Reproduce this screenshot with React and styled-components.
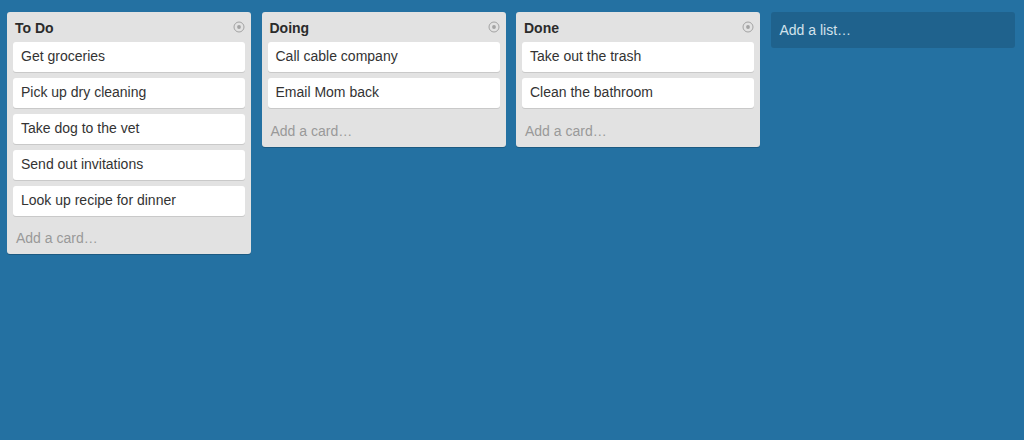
import React from 'react';
import styled, { createGlobalStyle } from 'styled-components';

const GlobalStyle = createGlobalStyle`
  html, body {
    margin: 0;
    padding: 0;
    background-color: #2471a2;
    font-family: "Liberation Sans", Arial, sans-serif;
  }
`;

const Board = styled.div`
  display: flex;
  flex-direction: row;
  align-items: flex-start;
  gap: 10.5px;
  padding: 12px 7px;
  min-height: 416px;
  background-color: #2471a2;
`;

const List = styled.div`
  width: 244px;
  flex: 0 0 244px;
  box-sizing: border-box;
  background-color: #e2e2e2;
  border-radius: 3px;
  box-shadow: 0 1px 0 #1c5a82;
  padding: 0 6px;
`;

const Header = styled.div`
  display: flex;
  align-items: center;
  justify-content: space-between;
  height: 30px;
  padding: 0 2px;
`;

const Title = styled.span`
  font-size: 14px;
  font-weight: bold;
  color: #2b2b2b;
  padding-top: 1px;
`;

const Menu = styled.svg`
  width: 12px;
  height: 12px;
  margin-right: -2px;
  margin-top: -1px;
`;

const Card = styled.div`
  background-color: #ffffff;
  border-radius: 3px;
  box-shadow: 0 1px 0 #c9c9c9;
  height: 30px;
  line-height: 29px;
  padding: 0 8px;
  margin-bottom: 6px;
  font-size: 14px;
  color: #333333;
`;

const AddCard = styled.div`
  height: ${(p) => p.$h}px;
  line-height: ${(p) => p.$h + 1}px;
  padding: 0 3px;
  font-size: 14px;
  color: #999999;
`;

const AddList = styled.div`
  width: 244px;
  flex: 0 0 244px;
  box-sizing: border-box;
  height: 36px;
  line-height: 37px;
  padding: 0 9px;
  border-radius: 3px;
  background-color: #1f628d;
  color: #d3e2ec;
  font-size: 14px;
`;

const MenuIcon = () => (
  <Menu viewBox="0 0 12 12">
    <circle cx="6" cy="6" r="5" fill="none" stroke="#a3a3a3" strokeWidth="1" />
    <circle cx="6" cy="6" r="1.9" fill="#a3a3a3" />
  </Menu>
);

const lists = [
  {
    title: 'To Do',
    cards: [
      'Get groceries',
      'Pick up dry cleaning',
      'Take dog to the vet',
      'Send out invitations',
      'Look up recipe for dinner',
    ],
    addHeight: 32,
  },
  { title: 'Doing', cards: ['Call cable company', 'Email Mom back'], addHeight: 33 },
  { title: 'Done', cards: ['Take out the trash', 'Clean the bathroom'], addHeight: 33 },
];

const App = () => (
  <>
    <GlobalStyle />
    <Board>
      {lists.map((list) => (
        <List key={list.title}>
          <Header>
            <Title>{list.title}</Title>
            <MenuIcon />
          </Header>
          {list.cards.map((c) => (
            <Card key={c}>{c}</Card>
          ))}
          <AddCard $h={list.addHeight}>Add a card…</AddCard>
        </List>
      ))}
      <AddList>Add a list…</AddList>
    </Board>
  </>
);

export default App;
